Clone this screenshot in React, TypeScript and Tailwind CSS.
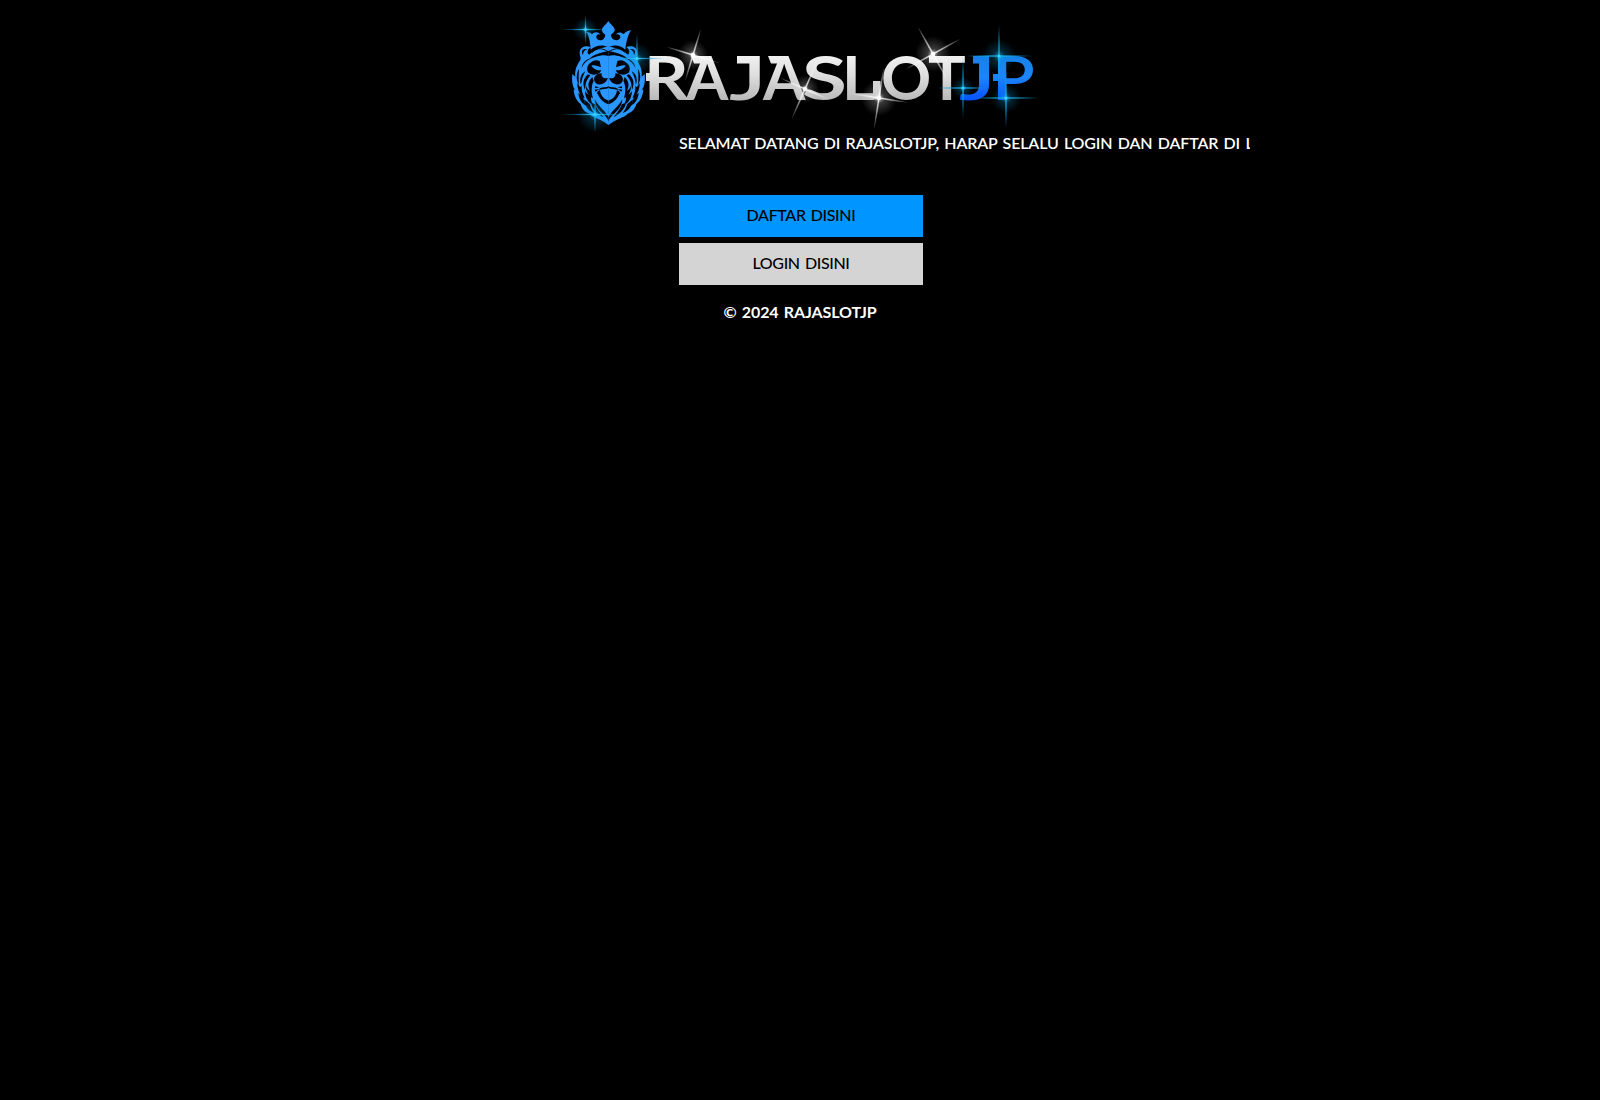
type SparkleProps = { x: number; y: number; h: number; v: number; rotate?: number; blue?: boolean; glow?: number };

function Sparkle({ x, y, h, v, rotate = 0, blue = false, glow = 16 }: SparkleProps) {
  const fill = blue ? "url(#rayBlue)" : "url(#rayWhite)";
  return (
    <g transform={`translate(${x} ${y}) rotate(${rotate})`}>
      <circle r={glow} fill={blue ? "url(#glowBlue)" : "url(#glowWhite)"} />
      <ellipse rx={h} ry={1.3} fill={fill} />
      <ellipse rx={1.3} ry={v} fill={fill} />
      <circle r={blue ? 1.6 : 2.2} fill={blue ? "#3fd0ff" : "#ffffff"} />
    </g>
  );
}

function LionHalf() {
  return (
    <g>
      {/* mane silhouette */}
      <path
        fill="#2997ff"
        d="M146 110 C122 112 102 120 88 134 C78 130 84 116 92 112 C82 106 62 108 59 126 C58 136 64 143 61 150 C48 168 44 184 46 200 L37 192 C35 212 37 230 46 241 L41 238 C42 260 52 276 62 282 C66 298 76 307 88 311 C98 324 126 326 146 346Z"
      />
      {/* face and mane cut-outs */}
      <g fill="#020308">
        <path d="M146 124 C126 126 104 132 88 146 C74 150 66 162 65 174 C73 154 90 145 108 140 C122 136 134 134 146 138Z" />
        <path d="M92 158 C82 163 79 177 84 187 C91 194 104 197 118 190 C121 186 123 184 124 181 C112 182 100 177 94 167 C105 164 112 169 123 172 L119 153 C108 148 99 151 92 158Z" />
        <path d="M125 190 C111 190 102 199 102 209 C105 222 117 226 126 222 C136 219 140 213 144 204 C135 207 123 204 125 190Z" />
        <path d="M120 240 C122 259 134 268 146 272 L146 283 C128 277 115 263 112 245Z" />
        <path d="M118 236 C128 230 138 234 146 229 L146 234 C136 238 130 236 118 240Z" />
        <path d="M146 322 C136 302 120 296 104 268 C105 288 117 301 126 309 C136 317 142 324 146 334Z" />
        <path d="M76 184 C63 190 57 208 63 224 C66 206 70 195 76 184Z M84 193 C69 206 67 222 75 240 C75 222 80 208 91 196Z M97 201 C83 215 83 228 90 242 C84 239 79 233 77 224 C78 245 84 256 99 265 C93 245 94 225 101 213Z" />
        <path d="M57 176 C47 194 49 212 57 224 C55 206 56 195 57 176Z M52 219 C52 244 62 257 74 264 C66 250 64 238 65 225 C62 236 59 230 52 219Z M75 243 C76 267 87 279 101 286 C92 272 92 264 95 257 C85 255 80 251 75 243Z M55 249 C57 270 67 281 78 287 C72 276 70 267 71 260Z M72 268 C76 293 87 304 103 309 C95 299 91 291 90 283Z M93 278 C96 297 111 310 130 322 C121 307 110 300 106 283Z" />
        <path d="M67 121 C72 116 77 116 82 118 C74 120 69 127 69 135 C65 131 65 126 67 121Z" />
        <path d="M105 229 L119 232 L105 235Z M104 239 L118 237 L107 245Z M110 250 L119 242 L116 254Z" />
      </g>
    </g>
  );
}

function Lion() {
  return (
    <g transform="translate(560 10) scale(.33333)">
      <LionHalf />
      <g transform="translate(291 0) scale(-1 1)">
        <LionHalf />
      </g>
      <path
        fill="#2997ff"
        d="M145 33 C140 42 128 49 126 58 C125 66 130 70 136 74 C135 83 130 91 120 91 C111 90 106 82 111 75 C114 71 119 73 121 74 C116 65 103 64 96 73 C91 67 84 65 78 66 C86 73 90 91 92 119 C110 105 127 103 145 112 C163 103 181 105 196 119 C199 92 204 76 213 60 C204 62 195 66 191 73 C184 66 172 65 168 74 C175 71 181 75 181 82 C179 89 173 92 166 90 C158 89 153 81 153 74 C160 69 165 65 164 58 C162 49 151 43 145 33Z"
      />
      <path fill="none" stroke="#02050a" strokeWidth="3" d="M97 127 C113 109 130 117 145 125 C161 117 178 109 194 127" />
    </g>
  );
}

type Letter = { char: string; x: number; stretch: number; weight: number };

const SILVER_LETTERS: Letter[] = [
  { char: "R", x: 644, stretch: 1.14, weight: 700 },
  { char: "A", x: 686, stretch: 1, weight: 700 },
  { char: "J", x: 729, stretch: 1.45, weight: 600 },
  { char: "A", x: 763, stretch: 1, weight: 700 },
  { char: "S", x: 802, stretch: 1.34, weight: 700 },
  { char: "L", x: 842, stretch: 1.04, weight: 700 },
  { char: "O", x: 881, stretch: 1.02, weight: 700 },
  { char: "T", x: 928, stretch: 1.03, weight: 700 },
];

const BLUE_LETTERS: Letter[] = [
  { char: "J", x: 959, stretch: 1.42, weight: 600 },
  { char: "P", x: 992, stretch: 1.15, weight: 600 },
];

function Letters({ letters, fill }: { letters: Letter[]; fill: string }) {
  return (
    <g fontFamily="Lato, sans-serif" fontSize="61" fill={fill}>
      {letters.map((l) => (
        <text key={l.x} fontWeight={l.weight} transform={`translate(${l.x} 99.5) scale(${l.stretch} 1)`}>
          {l.char}
        </text>
      ))}
    </g>
  );
}

function Logo() {
  return (
    <svg width="500" height="131" viewBox="550 0 500 131" role="img" aria-label="RAJASLOTJP" className="block overflow-visible">
      <defs>
        <linearGradient id="silver" gradientUnits="userSpaceOnUse" x1="0" y1="-45" x2="0" y2="1">
          <stop offset="0" stopColor="#f2f2f2" />
          <stop offset=".45" stopColor="#dedede" />
          <stop offset="1" stopColor="#b8b8b8" />
        </linearGradient>
        <linearGradient id="azure" gradientUnits="userSpaceOnUse" x1="0" y1="-45" x2="0" y2="1">
          <stop offset="0" stopColor="#1680e8" />
          <stop offset=".5" stopColor="#1c85fa" />
          <stop offset="1" stopColor="#0650ff" />
        </linearGradient>
        <radialGradient id="rayWhite">
          <stop offset="0" stopColor="#fff" />
          <stop offset=".5" stopColor="#fff" stopOpacity=".5" />
          <stop offset="1" stopColor="#fff" stopOpacity=".1" />
        </radialGradient>
        <radialGradient id="rayBlue">
          <stop offset="0" stopColor="#35d5ff" />
          <stop offset=".5" stopColor="#12a5df" stopOpacity=".55" />
          <stop offset="1" stopColor="#078bc2" stopOpacity=".05" />
        </radialGradient>
        <radialGradient id="glowWhite">
          <stop offset="0" stopColor="#fff" stopOpacity=".75" />
          <stop offset=".3" stopColor="#fff" stopOpacity=".22" />
          <stop offset="1" stopColor="#fff" stopOpacity="0" />
        </radialGradient>
        <radialGradient id="glowBlue">
          <stop offset="0" stopColor="#12c4ff" stopOpacity=".7" />
          <stop offset=".35" stopColor="#0795d0" stopOpacity=".25" />
          <stop offset="1" stopColor="#0795d0" stopOpacity="0" />
        </radialGradient>
      </defs>
      <Lion />
      <Letters letters={SILVER_LETTERS} fill="url(#silver)" />
      <Letters letters={BLUE_LETTERS} fill="url(#azure)" />
      {/* decorative serifs and spurs */}
      <g transform="translate(0 99.5)">
        <path fill="url(#silver)" d="M646 -26.500h10v8h-10z M737 -43.500h20v7.500h-20z M873 -18.500h7.500v18.500h-7.500z M691 -43.500h15v7.500h-12z M768 -43.500h15v7.500h-12z" />
        <path fill="url(#azure)" d="M973 -43.500h14v7.500h-14z M993 -25.500h10v7h-10z" />
      </g>
      <Sparkle x={585.5} y={29.5} h={23} v={15} blue glow={12} />
      <Sparkle x={637} y={58.5} h={27} v={27} blue glow={16} />
      <Sparkle x={595} y={114.5} h={33} v={19} blue glow={18} />
      <Sparkle x={693} y={55} h={27} v={27} rotate={17} glow={15} />
      <Sparkle x={805} y={89} h={27} v={32} rotate={24} glow={14} />
      <Sparkle x={933} y={54} h={31} v={31} rotate={-29} glow={18} />
      <Sparkle x={879} y={98} h={29} v={31} rotate={9} glow={18} />
      <Sparkle x={999} y={56} h={36} v={33} blue glow={17} />
      <Sparkle x={963} y={88} h={28} v={32} blue glow={11} />
      <Sparkle x={1006} y={98} h={35} v={32} blue glow={15} />
    </svg>
  );
}

export default function App() {
  return (
    <main className="flex min-h-screen flex-col items-center bg-black font-['Lato',sans-serif] text-base leading-6 font-medium">
      <Logo />
      <div className="w-[242px]">
        <div className="w-[571px] overflow-hidden whitespace-nowrap text-white">
          <span className="font-semibold tracking-[-0.15px] [word-spacing:1.5px]">
            SELAMAT DATANG DI RAJASLOTJP, HARAP SELALU LOGIN DAN DAFTAR DI L
          </span>
        </div>
      </div>
      <nav className="mt-10 flex w-[242px] flex-col gap-1.5 text-black">
        <a href="#" className="flex h-[42px] w-[244px] items-center justify-center bg-[#0095ff] pb-0.5 tracking-[-0.36px] [word-spacing:1.5px]">DAFTAR DISINI</a>
        <a href="#" className="flex h-[42px] w-[244px] items-center justify-center bg-[#d4d4d4] pb-0.5 tracking-[-0.36px] [word-spacing:1.5px]">LOGIN DISINI</a>
      </nav>
      <footer className="mt-[15px] font-bold tracking-[-0.1px] text-white [word-spacing:1.5px]">© 2024 RAJASLOTJP</footer>
    </main>
  );
}
